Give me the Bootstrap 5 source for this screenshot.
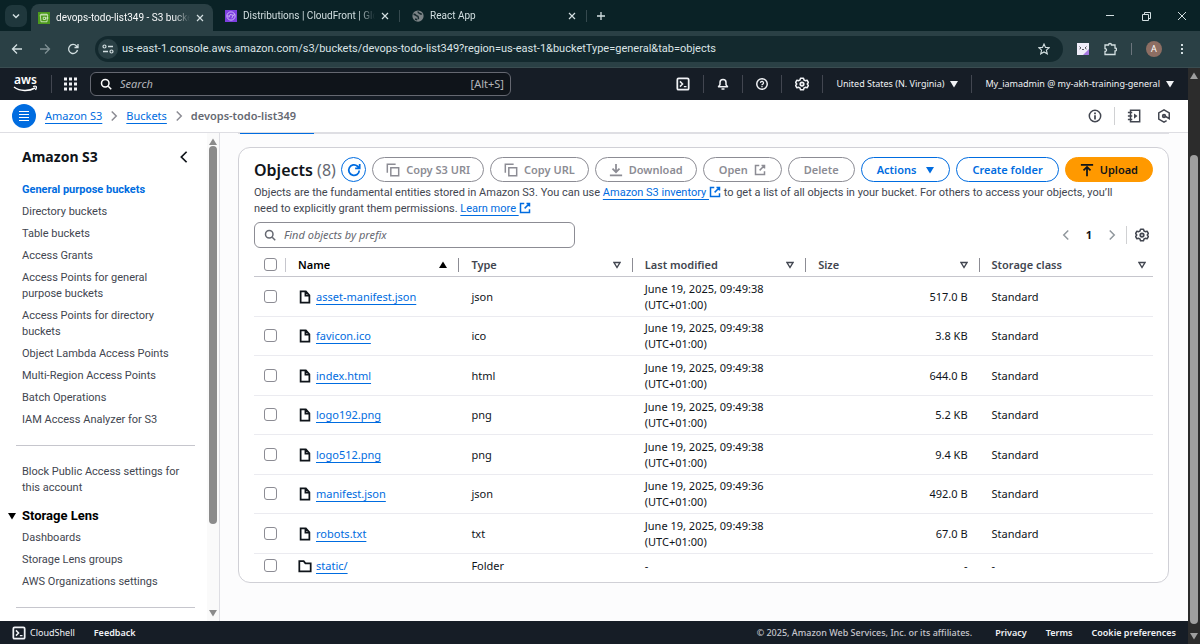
<!DOCTYPE html>
<html lang="en">
<head>
<meta charset="utf-8">
<meta name="viewport" content="width=device-width, initial-scale=1">
<title>devops-todo-list349 - S3 bucket</title>
<link href="https://cdn.jsdelivr.net/npm/bootstrap@5.3.0/dist/css/bootstrap.min.css" rel="stylesheet">
<style>
  :root { --blue:#006ce0; --ink:#0f141a; --body:#424650; --mute:#8c8c94; --night:#161d26; }
  body { font-family:"Noto Sans","Open Sans",sans-serif; font-size:11px; line-height:16px; color:var(--ink); background:#fcfcfd; }
  svg { fill:none; stroke:currentColor; stroke-width:2; flex:none; display:block; }
  button { background:none; border:0; padding:0; color:inherit; }
  .i8 { width:8px; height:8px; } .i12 { width:12px; height:12px; } .i14 { width:14px; height:14px; }
  .gap-s { gap:6px; } .gap-m { gap:12px; } .gap-n { gap:13px; } .gap-l { gap:14px; } .gap-xl { gap:19px; }

  /* browser frame */
  .tab-strip { background:#0a2226; height:31px; color:#d3dfe1; font-family:Roboto,sans-serif; font-size:10px; padding-left:5px; }
  .tab-search { width:22px; height:22px; border-radius:7px; background:#1f373c; }
  .browser-tab { width:186px; height:31px; padding:0 10px 0 12px; }
  .browser-tab.current { width:182px; height:27px; margin-left:4px; padding:0 9px 0 7px; background:#2a4045; border-radius:8px 8px 0 0; align-self:flex-end; }
  .tab-label { width:134px; overflow:hidden; white-space:nowrap; -webkit-mask-image:linear-gradient(90deg,#000 88%,transparent); mask-image:linear-gradient(90deg,#000 88%,transparent); }
  .tab-line { width:1px; height:12px; background:#35494e; }
  .toolbar { background:#2a4045; height:37px; color:#d3dfe1; padding:0 12px 0 11px; border-bottom:1px solid #3a4d51; }
  .address { height:26px; border-radius:13px; background:#13292e; font-family:Roboto,sans-serif; font-size:11px; padding:0 13px 0 3px; margin:0 14px 0 16px; }
  .site-chip { width:20px; height:20px; border-radius:50%; background:#2a4045; }
  .address input { background:none; border:0; outline:0; color:#dbe4e6; font:inherit; padding:0; min-width:0; }
  .avatar { width:16px; height:16px; border-radius:50%; background:#8d6e63; font-size:9px; color:#fff; }

  /* console header */
  .aws-nav { background:var(--night); height:32px; color:#f0f2f5; padding:0 14px 0 13px; font-weight:600; font-size:9px; }
  .aws-logo svg { overflow:visible; }
  .nav-rule { width:1px; height:18px; background:#424650; }
  .aws-search { width:421px; height:24px; border:1px solid #656871; border-radius:6px; background:#0f141a; padding:0 6px 0 9px; font-size:11px; font-weight:400; color:#b4b4bb; }
  .aws-search input, .find-box input { background:none; border:0; outline:0; padding:0; color:inherit; font:inherit; min-width:0; }
  .aws-search input::placeholder, .find-box input::placeholder { font-style:italic; color:inherit; opacity:1; }
  .crumb-bar { background:#fff; height:33px; border-bottom:1px solid #dedee3; padding:0 17px 0 12px; }
  .crumb-bar > svg { margin:0 6px; color:var(--mute); }
  .menu-dot { width:24px; height:24px; border-radius:50%; background:var(--blue); color:#fff; margin-right:9px; }
  .line-link { color:var(--blue); text-decoration:underline; text-decoration-thickness:1px; text-underline-offset:3px; }
  .crumb-bar strong { color:#656871; font-weight:600; }
  .tone { color:var(--body); }

  /* side navigation */
  .side { width:220px; background:#fff; border-right:1px solid #dedee3; }
  .side-body { padding:16px 12px 0 22px; font-family:Roboto,"Noto Sans",sans-serif; }
  .side-head { margin-bottom:17px; padding-right:4px; }
  .side h2 { font-family:"Noto Sans",sans-serif; font-size:14px; line-height:16px; font-weight:700; }
  .side a { display:block; color:var(--body); text-decoration:none; margin-bottom:6px; max-width:165px; }
  .side a.here { color:var(--blue); font-weight:700; }
  .side hr { margin:17px 0 18px -6px; border-color:#c6c6cd; opacity:1; }
  .side details { margin-top:12px; }
  .side summary { list-style:none; margin-left:-14px; font-size:13px; font-weight:700; margin-bottom:6px; color:#000; }
  .side-bar { width:12px; background:#fafafa; padding:5px 0 4px; color:#8b8b8b; }
  .side-bar .thumb { width:8px; border-radius:4px; background:#8b8b8b; flex:0 0 79%; }
  .page-bar { width:12px; background:#2c2c2c; padding:4px 0 4px; color:#9f9f9f; }
  .page-bar .thumb { width:8px; border-radius:4px; background:#9f9f9f; margin-top:75px; }

  /* objects panel */
  .content-col { padding:0 19px 38px 18px; }
  .tab-edge { height:1px; background:#dedee3; }
  .tab-edge div { width:74px; height:1px; background:var(--blue); margin-left:2px; }
  .panel { background:#fff; border:1px solid #d0d0d6; border-radius:12px; padding:9px 15px 0; margin-top:13px; }
  .panel h1 { font-size:16px; line-height:24px; font-weight:600; }
  .panel h1 span { font-weight:400; color:#656871; }
  .pill { height:25px; border:1px solid var(--mute); border-radius:13px; color:var(--mute); font-weight:600; padding:0 13px; display:flex; align-items:center; gap:6px; white-space:nowrap; }
  .pill-wide { padding:0 15px; }
  .pill-blue { border-color:var(--blue); color:var(--blue); }
  .pill-go { background:#ff9900; border-color:#ff9900; color:var(--ink); padding:0 14px; }
  .pill-round { width:25px; padding:0; justify-content:center; border-color:var(--blue); color:var(--blue); }
  .about { color:var(--body); margin:3px 0 5px; padding-right:20px; font-family:Roboto,"Noto Sans",sans-serif; }
  .about svg { display:inline-block; vertical-align:-2px; color:var(--blue); }
  .find-box { width:321px; height:26px; border:1px solid var(--mute); border-radius:6px; color:#656871; padding:0 9px; }
  .obj-table { width:100%; table-layout:fixed; margin-top:6px; }
  .obj-table th { height:22px; padding:0 12px; color:var(--body); border-bottom:1px solid #c6c6cd; font-weight:600; }
  .obj-table th:last-child { padding-right:7px; }
  .obj-table td { padding:4px 12px 3px; border-bottom:1px solid #ebebf0; }
  .obj-table tr:nth-child(even) td { padding-top:3px; }
  .obj-table tr:last-child td { border-bottom:0; padding-top:4px; padding-bottom:8px; }
  .obj-table th.pick, .obj-table td.pick { width:32px; padding-left:10px; padding-right:0; }
  .obj-table th > div { height:14px; margin-right:-12px; padding-right:11px; border-right:1px solid #8c8c94; }
  .obj-table th:last-child > div { margin:0; padding:0; border:0; }
  .obj-table th.pick > div { margin:0; padding:0; border-color:#c6c6cd; }
  .obj-table input { appearance:none; width:13px; height:13px; border:1px solid var(--mute); border-radius:3px; background:#fff; margin:0; display:block; }

  .foot { background:var(--night); color:#f0f2f5; height:23px; padding:0 12px; font-size:9px; font-weight:600; }
  .foot a { color:inherit; text-decoration:none; }
  .foot .legal { color:#c6c6cd; font-weight:500; }
</style>
</head>
<body class="d-flex flex-column min-vh-100">
<svg class="d-none" aria-hidden="true">
  <symbol id="down" viewBox="0 0 8 8"><path d="M0 1h8L4 7.500z" fill="currentColor" stroke="none"/></symbol>
  <symbol id="up" viewBox="0 0 8 8"><path d="M0 7h8L4 .5z" fill="currentColor" stroke="none"/></symbol>
  <symbol id="sort" viewBox="0 0 8 8"><path d="M1 1.500h6L4 6.500z" stroke-width="1.400"/></symbol>
  <symbol id="ext" viewBox="0 0 16 16"><path d="M7 2H2v12h12V9.500M10 2h4v4M14 2 7.500 8.500"/></symbol>
  <symbol id="copy" viewBox="0 0 16 16"><path d="M1.500 11V1.500H11M5.500 5.500h9v9h-9z" stroke-width="1.700"/></symbol>
  <symbol id="gear" viewBox="0 0 16 16"><path d="M6.300 1.500h3.400l.6 1.900 1.500.8 2-.5 1.500 2.600-1.300 1.700 1.300 1.700-1.500 2.600-2-.5-1.500.8-.6 1.900H6.300l-.6-1.900-1.500-.8-2 .5L.7 9.700 2 8 .7 6.300l1.500-2.600 2 .5 1.500-.8z" stroke-width="1.700" stroke-linejoin="round"/><circle cx="8" cy="8" r="2"/></symbol>
  <symbol id="shell" viewBox="0 0 16 16"><rect x="1.500" y="1.500" width="13" height="13" rx="1.500"/><path d="m4.500 5 3 3-3 3M9 11h3" stroke-width="1.700"/></symbol>
  <symbol id="find" viewBox="0 0 16 16"><circle cx="7" cy="7" r="5"/><path d="m11 11 4 4"/></symbol>
  <symbol id="file" viewBox="0 0 16 16"><path d="M3 1.500h6L13 6v8.500H3zM8.500 2v4.500H13"/></symbol>
  <symbol id="folder" viewBox="0 0 16 16"><path d="M1.500 2.500h5L8.500 5h6v9h-13z"/></symbol>
  <symbol id="cross" viewBox="0 0 8 8"><path d="m1 1 6 6M7 1 1 7" stroke-width="1.200"/></symbol>
  <symbol id="left" viewBox="0 0 16 16"><path d="M11 2 5 8l6 6"/></symbol>
  <symbol id="right" viewBox="0 0 16 16"><path d="m5 2 6 6-6 6"/></symbol>
  <symbol id="reload" viewBox="0 0 16 16"><path d="M14 8.500A6 6 0 1 1 12 3.700L14 6M14.500 1v5.200H9.300"/></symbol>
</svg>

<header>
  <div class="tab-strip d-flex align-items-center">
    <button class="tab-search d-flex align-items-center justify-content-center" aria-label="Search tabs"><svg class="i8" viewBox="0 0 8 8"><path d="m1 2.500 3 3 3-3" stroke-width="1.500"/></svg></button>
    <div class="browser-tab current d-flex align-items-center gap-s">
      <svg class="i12" viewBox="0 0 16 16"><path d="M0 0h16v16H0z" fill="#4d9a1d" stroke="none"/><path d="M3 4h10l-1 9H4zM3 4l1-1h8l1 1M7 7h3v3H7zM10 8h4" stroke="#e9f5e0" stroke-width="1"/></svg>
      <span class="tab-label text-light">devops-todo-list349 - S3 bucket</span>
      <button class="ms-auto" aria-label="Close tab"><svg class="i8"><use href="#cross"/></svg></button>
    </div>
    <div class="browser-tab d-flex align-items-center gap-s">
      <svg class="i12" viewBox="0 0 16 16"><path d="M0 0h16v16H0z" fill="#7d3fe0" stroke="none"/><circle cx="8" cy="8" r="5.500" stroke="#e6d9ff" stroke-width="1"/><path d="m5 10 2-4 4 1-2 4M3 8h2M11 7l2-1" stroke="#e6d9ff" stroke-width="1"/></svg>
      <span class="tab-label">Distributions | CloudFront | Global</span>
      <button class="ms-auto" aria-label="Close tab"><svg class="i8"><use href="#cross"/></svg></button>
    </div>
    <div class="tab-line"></div>
    <div class="browser-tab d-flex align-items-center gap-s">
      <svg class="i12" viewBox="0 0 16 16"><circle cx="8" cy="8" r="7.500" fill="#7b8386" stroke="none"/><path d="M2 6c3-1 3 2 5 2s1 3 2 4M8 2c0 3 3 2 5 4M4 12l3 1" stroke="#17292d"/></svg>
      <span class="tab-label">React App</span>
      <button class="ms-auto" aria-label="Close tab"><svg class="i8"><use href="#cross"/></svg></button>
    </div>
    <div class="tab-line"></div>
    <button class="ms-2" aria-label="New tab"><svg class="i12" viewBox="0 0 12 12"><path d="M6 2v8M2 6h8" stroke-width="1.300"/></svg></button>
    <div class="ms-auto d-flex align-items-center gap-4 pe-2 me-1">
      <button aria-label="Minimize"><svg class="i12" viewBox="0 0 12 12"><path d="M2 5.500h8" stroke-width="1"/></svg></button>
      <button aria-label="Restore"><svg class="i12" viewBox="0 0 12 12"><path d="M2.500 4.500h6v6h-6zM4.500 4V2.500h6v6H9" stroke-width="1"/></svg></button>
      <button aria-label="Close window"><svg class="i12" viewBox="0 0 12 12"><path d="m2 2 8 8M10 2l-8 8" stroke-width="1"/></svg></button>
    </div>
  </div>
  <div class="toolbar d-flex align-items-center">
    <div class="d-flex align-items-center gap-3">
      <button aria-label="Back"><svg class="i12" viewBox="0 0 12 12"><path d="M11 6H1.500M6 1.500 1.500 6 6 10.500" stroke-width="1.300"/></svg></button>
      <button class="opacity-50" aria-label="Forward"><svg class="i12" viewBox="0 0 12 12"><path d="M1 6h9.500M6 1.500 10.500 6 6 10.500" stroke-width="1.300"/></svg></button>
      <button aria-label="Reload"><svg class="i12" viewBox="0 0 12 12"><path d="M10.500 7A4.500 4.500 0 1 1 9.500 3L11 4.500M11 1v3.500H7.500" stroke-width="1.300"/></svg></button>
    </div>
    <div class="address d-flex align-items-center flex-grow-1 gap-1">
      <span class="site-chip d-flex align-items-center justify-content-center"><svg class="i12" viewBox="0 0 12 12"><circle cx="2.500" cy="3.500" r="1.500" stroke-width="1.200"/><path d="M6 3.500h5M1 8.500h5" stroke-width="1.300"/><circle cx="9.500" cy="8.500" r="1.500" stroke-width="1.200"/></svg></span>
      <input class="flex-grow-1" aria-label="Address" value="us-east-1.console.aws.amazon.com/s3/buckets/devops-todo-list349?region=us-east-1&amp;bucketType=general&amp;tab=objects">
      <button aria-label="Bookmark"><svg class="i12" viewBox="0 0 12 12"><path d="m6 1 1.500 3.400 3.700.3-2.800 2.400.9 3.700L6 8.900l-3.300 1.900.9-3.700L.8 4.700l3.700-.3z" stroke-width="1.100"/></svg></button>
    </div>
    <div class="d-flex align-items-center gap-l">
      <svg class="i12" viewBox="0 0 12 12"><path d="M0 0h12v12H0z" fill="#f0edf9" stroke="none"/><path d="M12 6v6H6z" fill="#a678e0" stroke="none"/><path d="m2.500 3.500 1.500 1.500-1.500 1M9.500 3.500 8 5l1.500 1M5 6.500h2" stroke="#333" stroke-width=".8"/></svg>
      <svg class="i14" viewBox="0 0 14 14"><path d="M2 3h3.500a1.500 1.500 0 0 1 3 0H12v3a1.500 1.500 0 0 1 0 3v3.500H2V9.500a1.500 1.500 0 0 0 0-3z" stroke-width="1.300"/></svg>
      <div class="tab-line bg-secondary"></div>
      <button class="avatar d-flex align-items-center justify-content-center" aria-label="Profile">A</button>
      <button aria-label="Browser menu"><svg class="i12" viewBox="0 0 12 12"><path d="M5 1h2v2H5zM5 5h2v2H5zM5 9h2v2H5z" fill="currentColor" stroke="none"/></svg></button>
    </div>
  </div>
</header>

<div class="d-flex flex-grow-1">
  <div class="d-flex flex-column flex-grow-1">
    <nav class="aws-nav d-flex align-items-center">
      <div class="d-flex align-items-center gap-m">
        <a href="#" class="aws-logo text-white text-decoration-none" aria-label="AWS home"><svg width="26" height="20" viewBox="0 0 26 20"><text x="1" y="10" font-size="12" font-weight="600" fill="currentColor" stroke="none">aws</text><path d="M1 13c6 4.500 15 4.500 21 1" stroke-width="1.500"/><path d="M20 12.500c3-1 4.500-.5 2.500 3.500" stroke-width="1.300"/></svg></a>
        <div class="nav-rule"></div>
        <button aria-label="Services"><svg class="i14" viewBox="0 0 14 14"><path d="M0 2h14M0 7h14M0 12h14" stroke-width="3" stroke-dasharray="3 2"/></svg></button>
        <label class="aws-search d-flex align-items-center gap-2"><svg class="i12 text-white"><use href="#find"/></svg><input class="flex-grow-1" placeholder="Search" aria-label="Search"><span>[Alt+S]</span></label>
      </div>
      <div class="ms-auto d-flex align-items-center gap-n">
        <button aria-label="CloudShell"><svg class="i14"><use href="#shell"/></svg></button><div class="nav-rule"></div>
        <button aria-label="Notifications"><svg class="i12" viewBox="0 0 16 16"><path d="M2 11.500h12L12 9V6a4 4 0 0 0-8 0v3zM6 14.500h4" stroke-linejoin="round"/></svg></button><div class="nav-rule"></div>
        <button aria-label="Help"><svg class="i12" viewBox="0 0 16 16"><circle cx="8" cy="8" r="7"/><path d="M6 6.500a2 2 0 1 1 2.500 2c-.5.200-.5.500-.5 1.200M8 10.500v1.800" stroke-width="1.700"/></svg></button><div class="nav-rule"></div>
        <button aria-label="Settings"><svg class="i14"><use href="#gear"/></svg></button><div class="nav-rule"></div>
        <button class="d-flex align-items-center gap-s">United States (N. Virginia) <svg class="i8"><use href="#down"/></svg></button><div class="nav-rule"></div>
        <button class="d-flex align-items-center gap-s">My_iamadmin @ my-akh-training-general <svg class="i8"><use href="#down"/></svg></button>
      </div>
    </nav>
    <div class="crumb-bar d-flex align-items-center">
      <button class="menu-dot d-flex align-items-center justify-content-center" aria-label="Open navigation"><svg class="i12" viewBox="0 0 12 12"><path d="M1 1.500h10M1 4.500h10M1 7.500h10M1 10.500h10" stroke-width="1"/></svg></button>
      <a class="line-link" href="#">Amazon S3</a>
      <svg class="i12"><use href="#right"/></svg>
      <a class="line-link" href="#">Buckets</a>
      <svg class="i12"><use href="#right"/></svg>
      <strong>devops-todo-list349</strong>
      <div class="ms-auto d-flex align-items-center gap-m tone">
        <button aria-label="Info"><svg class="i14" viewBox="0 0 16 16"><circle cx="8" cy="8" r="6.500" stroke-width="1.700"/><path d="M8 7v5M8 4v2"/></svg></button>
        <div class="nav-rule opacity-25"></div>
        <button aria-label="Tutorials"><svg class="i14" viewBox="0 0 16 16"><path d="M4 1.500h10.500v13H4zM1 4h5M1 8h5M1 12h5" stroke-width="1.700"/><path d="m8 5 4 3-4 3z" fill="currentColor" stroke="none"/></svg></button>
        <button class="ms-1" aria-label="Assistant"><svg class="i14" viewBox="0 0 16 16"><path d="m11 13.300-3 1.700-6-3.500v-7L8 1l6 3.500v6.500L9 8" stroke-width="1.700"/><circle cx="8" cy="8" r="1.500"/></svg></button>
      </div>
    </div>

    <div class="d-flex flex-grow-1">
      <aside class="side d-flex flex-shrink-0">
        <div class="side-body flex-grow-1">
          <div class="side-head d-flex justify-content-between align-items-center"><h2 class="mb-0">Amazon S3</h2><button aria-label="Close navigation"><svg class="i14"><use href="#left"/></svg></button></div>
          <a class="here" href="#">General purpose buckets</a>
          <a href="#">Directory buckets</a>
          <a href="#">Table buckets</a>
          <a href="#">Access Grants</a>
          <a href="#">Access Points for general purpose buckets</a>
          <a href="#">Access Points for directory buckets</a>
          <a href="#">Object Lambda Access Points</a>
          <a href="#">Multi-Region Access Points</a>
          <a href="#">Batch Operations</a>
          <a href="#">IAM Access Analyzer for S3</a>
          <hr>
          <a href="#">Block Public Access settings for this account</a>
          <details open>
            <summary class="d-flex align-items-center gap-s"><svg class="i8"><use href="#down"/></svg>Storage Lens</summary>
            <a href="#">Dashboards</a>
            <a href="#">Storage Lens groups</a>
            <a href="#">AWS Organizations settings</a>
          </details>
          <hr class="mb-0">
        </div>
        <div class="side-bar d-flex flex-column align-items-center">
          <svg class="i8"><use href="#up"/></svg><div class="thumb"></div><svg class="i8 mt-auto"><use href="#down"/></svg>
        </div>
      </aside>

      <main class="content-col flex-grow-1">
        <div class="tab-edge"><div></div></div>
        <section class="panel">
          <div class="d-flex align-items-center">
            <h1 class="mb-0 text-nowrap">Objects <span>(8)</span></h1>
            <div class="ms-auto d-flex gap-s">
              <button class="pill pill-round" aria-label="Refresh"><svg class="i14"><use href="#reload"/></svg></button>
              <button class="pill" disabled><svg class="i14"><use href="#copy"/></svg>Copy S3 URI</button>
              <button class="pill" disabled><svg class="i14"><use href="#copy"/></svg>Copy URL</button>
              <button class="pill" disabled><svg class="i14" viewBox="0 0 16 16"><path d="M8 1v9M4 6.500 8 10.500l4-4M1 14h14"/></svg>Download</button>
              <button class="pill pill-wide" disabled>Open<svg class="i12"><use href="#ext"/></svg></button>
              <button class="pill pill-wide" disabled>Delete</button>
              <button class="pill pill-wide pill-blue">Actions<svg class="i8 ms-1"><use href="#down"/></svg></button>
              <button class="pill pill-wide pill-blue">Create folder</button>
              <button class="pill pill-go"><svg class="i14" viewBox="0 0 16 16"><path d="M8 15V5M4 8.500l4-4 4 4M1 2h14"/></svg>Upload</button>
            </div>
          </div>
          <p class="about">Objects are the fundamental entities stored in Amazon S3. You can use <a class="line-link" href="#">Amazon S3 inventory <svg class="i12"><use href="#ext"/></svg></a> to get a list of all objects in your bucket. For others to access your objects, you’ll need to explicitly grant them permissions. <a class="line-link" href="#">Learn more <svg class="i12"><use href="#ext"/></svg></a></p>
          <div class="d-flex align-items-center">
            <label class="find-box d-flex align-items-center gap-2"><svg class="i12"><use href="#find"/></svg><input class="flex-grow-1" placeholder="Find objects by prefix" aria-label="Find objects by prefix"></label>
            <div class="ms-auto d-flex align-items-center gap-l">
              <button class="text-secondary opacity-75" aria-label="Previous page"><svg class="i12"><use href="#left"/></svg></button>
              <button class="fw-bold">1</button>
              <button class="text-secondary opacity-75" aria-label="Next page"><svg class="i12"><use href="#right"/></svg></button>
            </div>
            <div class="nav-rule opacity-25 ms-2 me-2"></div>
            <button class="me-1 tone" aria-label="Preferences"><svg class="i14"><use href="#gear"/></svg></button>
          </div>
          <table class="obj-table">
            <thead><tr>
              <th class="pick"><div class="d-flex align-items-center"><input type="checkbox" aria-label="Select all"></div></th>
              <th class="text-black"><div class="d-flex align-items-center justify-content-between">Name<svg class="i8"><use href="#up"/></svg></div></th>
              <th><div class="d-flex align-items-center justify-content-between">Type<svg class="i8"><use href="#sort"/></svg></div></th>
              <th><div class="d-flex align-items-center justify-content-between">Last modified<svg class="i8"><use href="#sort"/></svg></div></th>
              <th><div class="d-flex align-items-center justify-content-between">Size<svg class="i8"><use href="#sort"/></svg></div></th>
              <th><div class="d-flex align-items-center justify-content-between">Storage class<svg class="i8"><use href="#sort"/></svg></div></th>
            </tr></thead>
            <tbody>
              <tr><td class="pick"><input type="checkbox" aria-label="Select asset-manifest.json"></td><td><div class="d-flex align-items-center gap-1"><svg class="i14"><use href="#file"/></svg><a class="line-link" href="#">asset-manifest.json</a></div></td><td>json</td><td>June 19, 2025, 09:49:38<br>(UTC+01:00)</td><td class="text-end">517.0 B</td><td>Standard</td></tr>
              <tr><td class="pick"><input type="checkbox" aria-label="Select favicon.ico"></td><td><div class="d-flex align-items-center gap-1"><svg class="i14"><use href="#file"/></svg><a class="line-link" href="#">favicon.ico</a></div></td><td>ico</td><td>June 19, 2025, 09:49:38<br>(UTC+01:00)</td><td class="text-end">3.8 KB</td><td>Standard</td></tr>
              <tr><td class="pick"><input type="checkbox" aria-label="Select index.html"></td><td><div class="d-flex align-items-center gap-1"><svg class="i14"><use href="#file"/></svg><a class="line-link" href="#">index.html</a></div></td><td>html</td><td>June 19, 2025, 09:49:38<br>(UTC+01:00)</td><td class="text-end">644.0 B</td><td>Standard</td></tr>
              <tr><td class="pick"><input type="checkbox" aria-label="Select logo192.png"></td><td><div class="d-flex align-items-center gap-1"><svg class="i14"><use href="#file"/></svg><a class="line-link" href="#">logo192.png</a></div></td><td>png</td><td>June 19, 2025, 09:49:38<br>(UTC+01:00)</td><td class="text-end">5.2 KB</td><td>Standard</td></tr>
              <tr><td class="pick"><input type="checkbox" aria-label="Select logo512.png"></td><td><div class="d-flex align-items-center gap-1"><svg class="i14"><use href="#file"/></svg><a class="line-link" href="#">logo512.png</a></div></td><td>png</td><td>June 19, 2025, 09:49:38<br>(UTC+01:00)</td><td class="text-end">9.4 KB</td><td>Standard</td></tr>
              <tr><td class="pick"><input type="checkbox" aria-label="Select manifest.json"></td><td><div class="d-flex align-items-center gap-1"><svg class="i14"><use href="#file"/></svg><a class="line-link" href="#">manifest.json</a></div></td><td>json</td><td>June 19, 2025, 09:49:36<br>(UTC+01:00)</td><td class="text-end">492.0 B</td><td>Standard</td></tr>
              <tr><td class="pick"><input type="checkbox" aria-label="Select robots.txt"></td><td><div class="d-flex align-items-center gap-1"><svg class="i14"><use href="#file"/></svg><a class="line-link" href="#">robots.txt</a></div></td><td>txt</td><td>June 19, 2025, 09:49:38<br>(UTC+01:00)</td><td class="text-end">67.0 B</td><td>Standard</td></tr>
              <tr><td class="pick"><input type="checkbox" aria-label="Select static/"></td><td><div class="d-flex align-items-center gap-1"><svg class="i14"><use href="#folder"/></svg><a class="line-link" href="#">static/</a></div></td><td>Folder</td><td>-</td><td class="text-end">-</td><td>-</td></tr>
            </tbody>
          </table>
        </section>
      </main>
    </div>

    <footer class="foot d-flex align-items-center gap-xl">
      <button class="d-flex align-items-center gap-1"><svg class="i14"><use href="#shell"/></svg>CloudShell</button>
      <a href="#">Feedback</a>
      <span class="legal ms-auto me-1">© 2025, Amazon Web Services, Inc. or its affiliates.</span>
      <a href="#">Privacy</a><a href="#">Terms</a><a href="#">Cookie preferences</a>
    </footer>
  </div>
  <div class="page-bar d-flex flex-column align-items-center flex-shrink-0">
    <svg class="i8"><use href="#up"/></svg><div class="thumb flex-grow-1 mb-2"></div><svg class="i8"><use href="#down"/></svg>
  </div>
</div>
<script src="https://cdn.jsdelivr.net/npm/bootstrap@5.3.0/dist/js/bootstrap.bundle.min.js"></script>
</body>
</html>
